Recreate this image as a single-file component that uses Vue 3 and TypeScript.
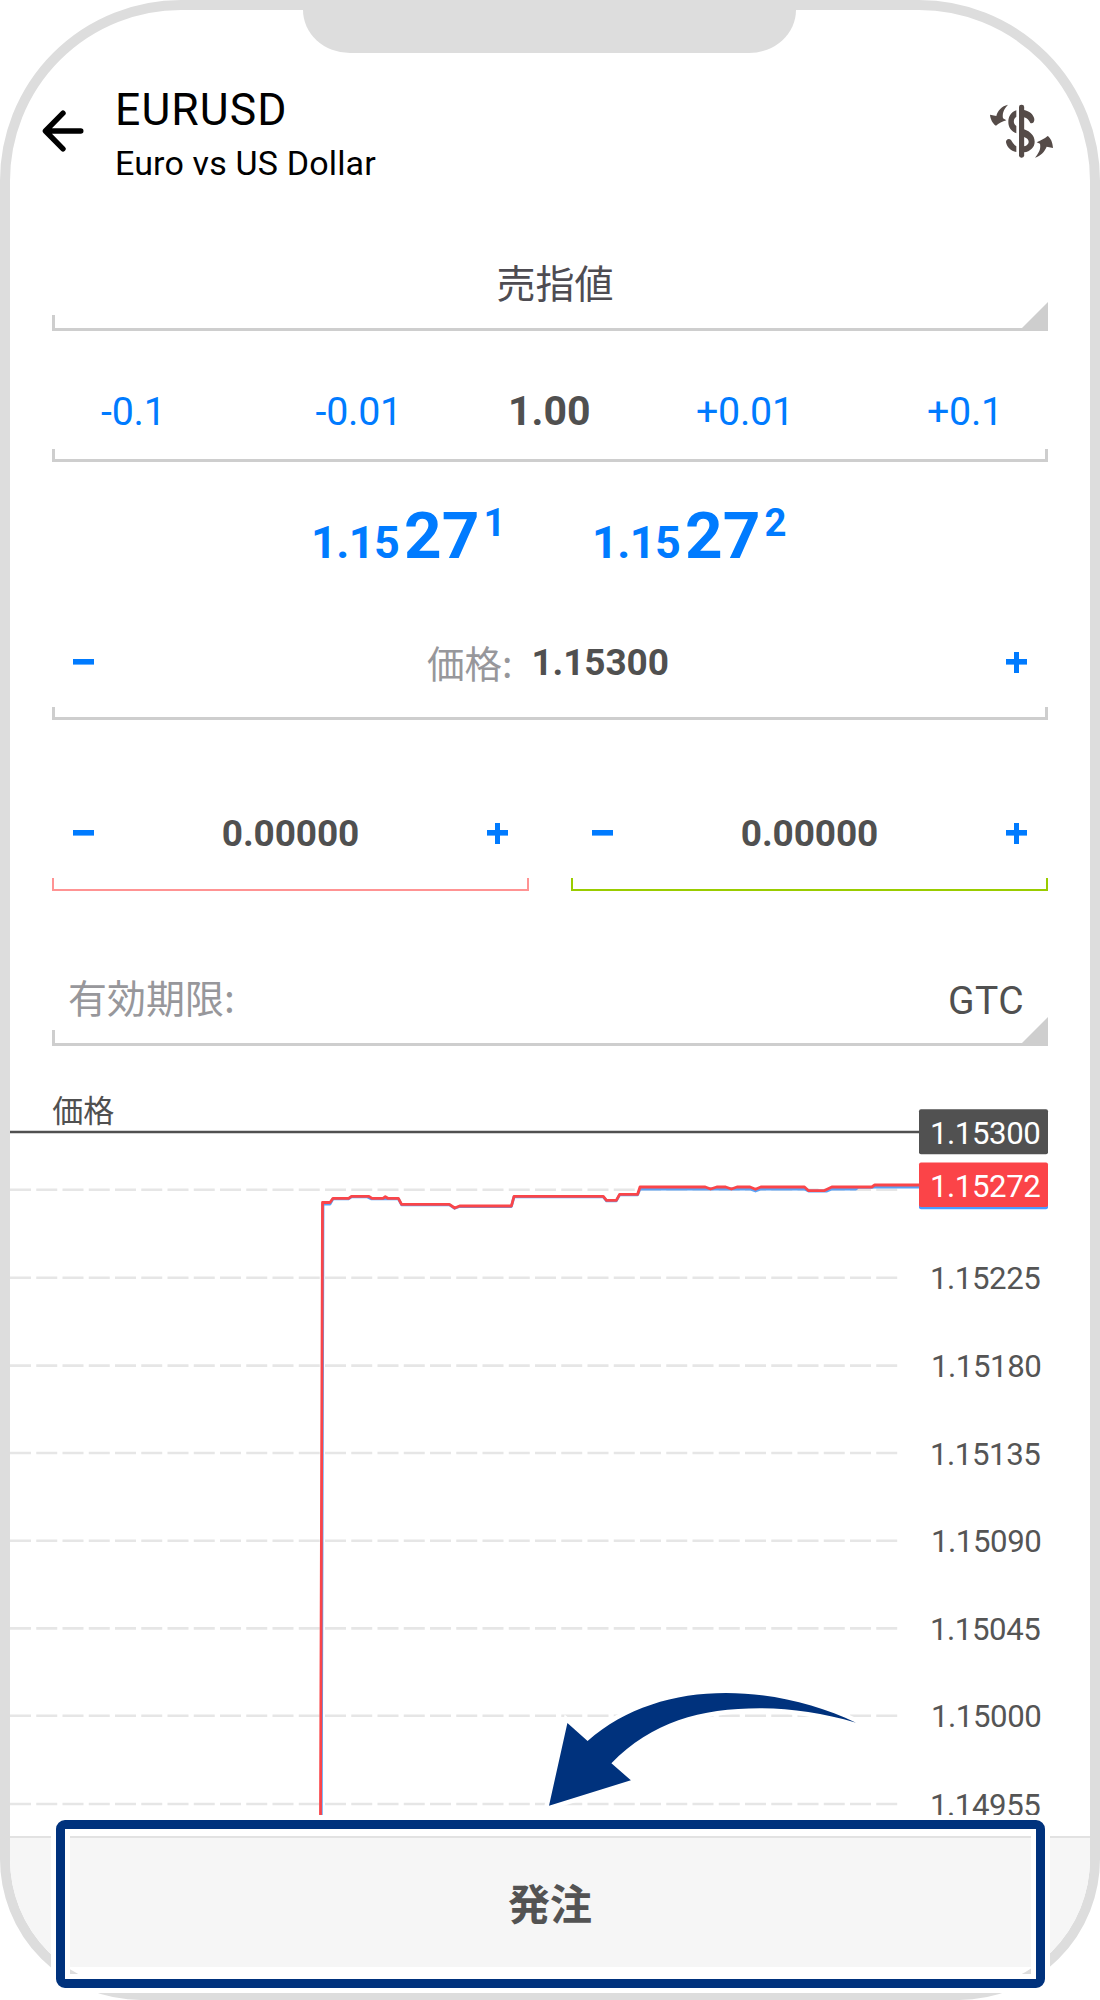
<script setup lang="ts">
interface AxisLabel {
  text: string
  line: number
  x: number
}

const volumeSteps: { label: string; current?: boolean }[] = [
  { label: '-0.1' },
  { label: '-0.01' },
  { label: '1.00', current: true },
  { label: '+0.01' },
  { label: '+0.1' },
]

const quotes = [
  { head: '1.15', pips: '27', point: '1' },
  { head: '1.15', pips: '27', point: '2' },
]

const stops = [
  { kind: 'loss', value: '0.00000' },
  { kind: 'profit', value: '0.00000' },
]

const axis: AxisLabel[] = [
  { text: '1.15225', line: 1277.7, x: 1040.5 },
  { text: '1.15180', line: 1365.6, x: 1041.5 },
  { text: '1.15135', line: 1453, x: 1040.5 },
  { text: '1.15090', line: 1540.8, x: 1041.5 },
  { text: '1.15045', line: 1628.4, x: 1040.5 },
  { text: '1.15000', line: 1715.8, x: 1041.5 },
  { text: '1.14955', line: 1804, x: 1040.5 },
]
const gridLines = [1189.7, ...axis.map((a) => a.line)]

const askPath =
  'M320.5 1815L322.5 1202.5L330 1202.5L333 1198.3H348.5L351.5 1196.3H369L372 1198.3H383L385.3 1196.7L387.8 1198.3H398.4L401.6 1204.3H449.4L454.7 1208L459.6 1206H511.4L514 1196.3H603.3L606.5 1200.3H616.3L619.6 1194.3H637.6L640 1187H705.3L710.6 1189L716.7 1187H725.7L731.4 1189L737 1187H750L755.5 1189.3L760.8 1187H804.5L808.6 1190.7H824L831.8 1187H871.8L874.7 1185H920'
const bidPath =
  'M321.3 1815L323 1204H330L333 1198.8H348.5L351.5 1196.8H367L371 1198.8H398.4L401.6 1204.8H449.4L454.7 1208.3L459.6 1206.5H511.4L514 1196.8H603.3L606.5 1200.8H616.3L619.6 1194.8H637.6L640 1189H750L755.5 1191L760.8 1189H804.5L808.6 1191H827L831.8 1189H856L858 1187.4H871.8L874.7 1187H920'
</script>

<template>
  <main class="stage">
    <div class="phone">
      <div class="notch"></div>
      <div class="screen">
        <header class="header">
          <svg class="back" width="44" height="42" viewBox="0 0 44 42">
            <path d="M39.8 21H5M22 3.2L4.4 21L22 38.8" />
          </svg>
          <div class="titles">
            <h1>EURUSD</h1>
            <p>Euro vs US Dollar</p>
          </div>
          <svg class="swap" width="64" height="56" viewBox="60 70 192 168">
            <rect x="147" y="75" width="15.5" height="159" rx="7" />
            <path d="M139 92C123 97 115 111 115 127C115 143 124 155 139 161V139C129 132 129 118 139 111Z" />
            <path d="M162 91C178 94 190 104 193 118C194 128 187 133 181 130C177 122 171 115 162 113Z" />
            <path d="M162 149C182 156 194 169 194 186C194 203 181 215 162 218V200C181 196 181 178 162 172Z" />
            <path d="M108 188C107 179 117 174 123 181C128 190 133 196 139 200V217C122 214 111 203 108 188Z" />
            <path d="M114 75C99 91 97 103 99 116L109 122C97 125 86 131 78 138C68 132 61 118 60 105L79 109C83 93 95 79 114 75Z" />
            <path d="M195 234C211 214 212 205 210 192L200 188C211 183 223 177 233 169C242 175 248 188 249 205L230 201C224 216 212 229 195 234Z" />
          </svg>
        </header>

        <section class="field order-type">
          <span class="cjk">売指値</span>
          <i class="corner"></i>
        </section>

        <section class="field volume">
          <span v-for="s in volumeSteps" :key="s.label" :class="{ current: s.current }">{{ s.label }}</span>
        </section>

        <section class="quotes">
          <div v-for="q in quotes" :key="q.point" class="quote">
            <span class="head">{{ q.head }}</span><span class="pips">{{ q.pips }}</span><span class="point">{{ q.point }}</span>
          </div>
        </section>

        <section class="field stepper price">
          <i class="minus"></i>
          <div class="value">
            <span class="cjk label">価格:</span><b>1.15300</b>
          </div>
          <i class="plus"></i>
        </section>

        <section class="stops">
          <div v-for="s in stops" :key="s.kind" class="field stepper" :class="s.kind">
            <i class="minus"></i>
            <b>{{ s.value }}</b>
            <i class="plus"></i>
          </div>
        </section>

        <section class="field expiry">
          <span class="cjk label">有効期限:</span>
          <span class="gtc">GTC</span>
          <i class="corner"></i>
        </section>

        <svg class="chart" width="1080" height="769" viewBox="10 1046 1080 769">
          <text class="caption" x="52.2" y="1122">価格</text>
          <line v-for="y in gridLines" :key="y" class="grid" x1="10" x2="897.2" :y1="y" :y2="y" />
          <path class="bid" :d="bidPath" />
          <path class="ask" :d="askPath" />
          <line class="order-line" x1="10" x2="920" y1="1132" y2="1132" />
          <rect x="919" y="1170" width="129" height="39.3" rx="2" fill="#4a9bff" />
          <rect x="919" y="1162.5" width="129" height="44.6" rx="2" fill="#fb4448" />
          <rect x="919" y="1109.2" width="129" height="45" rx="2" fill="#515151" />
          <text class="tag" x="1040.5" y="1143.7">1.15300</text>
          <text class="tag" x="1040.5" y="1196.7">1.15272</text>
          <text v-for="a in axis" :key="a.text" class="axis" :x="a.x" :y="a.line + 11.6">{{ a.text }}</text>
          <path
            class="pointer"
            d="M549 1805.7L567.4 1723L587.6 1741C625 1708 674 1693 726 1693C772 1693 818 1704.5 856 1722.7C823 1713 791 1708.3 760 1708.3C700 1708.3 652 1722 611.4 1763.3L630.9 1780.3Z"
          />
        </svg>

        <footer class="footer">
          <button type="button" class="cjk">発注</button>
        </footer>
      </div>
    </div>
    <div class="highlight"></div>
  </main>
</template>

<style>
body {
  margin: 0;
  background: #fff;
}
</style>

<style scoped>
.stage,
.stage *,
.stage *::after {
  box-sizing: border-box;
}
.stage {
  position: relative;
  width: 1100px;
  height: 2000px;
  overflow: hidden;
  font-family: Roboto, 'Noto Sans CJK JP', sans-serif;
  color: #505050;
}
.phone {
  position: relative;
  height: 2000px;
  border: 10px solid #ddd;
  border-radius: 181px 181px 141px 141px;
}
.notch {
  position: absolute;
  top: -1px;
  left: 293px;
  width: 493px;
  height: 44px;
  background: #ddd;
  border-radius: 0 0 47px 47px / 0 0 43px 43px;
}
.screen {
  display: flex;
  flex-direction: column;
  height: 1980px;
  overflow: hidden;
  border-radius: 171px 171px 131px 131px;
}
.cjk {
  font-family: 'Noto Sans CJK JP', sans-serif;
}

.header {
  display: flex;
  align-items: center;
  height: 243px;
  padding: 0 36px 0 31px;
}
.back {
  margin-bottom: 1px;
  fill: none;
  stroke: #000;
  stroke-width: 5.4;
  stroke-linecap: round;
  stroke-linejoin: round;
}
.titles {
  flex: 1;
  margin: 6px 0 0 30px;
  color: #000;
}
h1 {
  margin: 0;
  font-size: 44.5px;
  font-weight: 400;
  line-height: 52px;
  letter-spacing: 1.1px;
}
p {
  margin: 5px 0 0;
  font-size: 34px;
  line-height: 44px;
  letter-spacing: 0.16px;
}
.swap {
  margin-bottom: 1px;
  fill: #554b48;
}

/* Underline with short upright ticks at both ends */
.field {
  --line: #cecece;
  --weight: 3px;
  --tick: 13px;
  position: relative;
  display: flex;
  align-items: center;
  margin: 0 42px;
}
.field::after {
  content: '';
  position: absolute;
  left: 0;
  right: 0;
  bottom: 0;
  height: var(--tick);
  border: var(--weight) solid var(--line);
  border-top: 0;
}
.corner {
  position: absolute;
  right: 0;
  bottom: 0;
  width: 29px;
  height: 29px;
  background: #cecece;
  clip-path: polygon(100% 0, 100% 100%, 0 100%);
}

.order-type {
  --tick: 16px;
  height: 78px;
  justify-content: center;
  padding: 0 0 23px 10px;
  font-size: 39px;
  line-height: 50px;
  color: #4e4c52;
}

.volume {
  display: grid;
  grid-template-columns: 214.5px 192.5px 188px 231px auto;
  height: 101px;
  margin-top: 30px;
  padding-left: 49px;
  font-size: 39.4px;
  line-height: 50px;
  letter-spacing: -0.25px;
  color: #007bff;
}
.volume .current {
  margin-bottom: 1px;
  font-size: 41px;
  font-weight: 700;
  letter-spacing: 0;
  color: #505050;
}

.quotes {
  display: flex;
  height: 144px;
  padding: 36px 0 0 301px;
  color: #007bff;
  font-weight: 700;
}
.quote {
  width: 281px;
  font-size: 65.7px;
  line-height: 76px;
  white-space: nowrap;
}
.head {
  margin-right: 5px;
  font-size: 45px;
  line-height: 0;
  letter-spacing: -0.6px;
}
.point {
  margin-left: 4px;
  font-size: 38.4px;
  line-height: 0;
  vertical-align: 22px;
}

.stepper {
  height: 114px;
  justify-content: space-between;
  padding: 0 21px;
  font-size: 37px;
  line-height: 46px;
}
.stepper b {
  letter-spacing: -0.1px;
}
.minus,
.plus {
  width: 21px;
  height: 21px;
  margin-bottom: 2px;
  background: linear-gradient(#007bff, #007bff) center / 21px 5.6px no-repeat;
}
.plus {
  background:
    linear-gradient(#007bff, #007bff) center / 21px 5.6px no-repeat,
    linear-gradient(#007bff, #007bff) center / 5px 21px no-repeat;
}
.price .value {
  display: flex;
  flex: 1;
  align-items: center;
  padding-left: 333px;
}
.label {
  color: #97979b;
}
.price .label {
  margin: 0 19px 3px 0;
  font-size: 37.5px;
}

.stops {
  display: grid;
  grid-template-columns: 477px 477px;
  gap: 42px;
  margin: 57px 42px 0;
}
.stops .field {
  --weight: 2px;
  margin: 0;
}
.loss {
  --line: #ff9393;
}
.profit {
  --line: #9acc00;
}

.expiry {
  --tick: 16px;
  justify-content: space-between;
  height: 91px;
  margin-top: 64px;
  padding: 0 24px 0 16px;
  font-size: 39px;
  line-height: 48px;
}
.expiry .label {
  margin-bottom: 10px;
}
.gtc {
  letter-spacing: 0.4px;
}

.chart {
  display: block;
  flex: none;
}
.caption {
  font: 31px 'Noto Sans CJK JP', sans-serif;
  fill: #505050;
}
.grid {
  stroke: #e6e6e6;
  stroke-width: 2.6;
  stroke-dasharray: 21 5.25;
}
.order-line {
  stroke: #505050;
  stroke-width: 2.6;
}
.ask,
.bid {
  fill: none;
  stroke-width: 2.8;
  stroke-linejoin: round;
}
.ask {
  stroke: #fa4549;
}
.bid {
  stroke: #5aa2f5;
}
.axis,
.tag {
  font-family: Roboto, sans-serif;
  font-size: 31.2px;
  letter-spacing: -0.4px;
  text-anchor: end;
  fill: #555;
}
.tag {
  fill: #fff;
}
.pointer {
  fill: #00327d;
  stroke: #fff;
  stroke-width: 9;
  paint-order: stroke;
}

.footer {
  margin-top: 21px;
  height: 131px;
  border-top: 2px solid #e2e2e2;
  background: #f6f6f6;
}
button {
  display: block;
  width: 100%;
  height: 128px;
  padding: 0;
  border: 0;
  background: none;
  font-size: 42px;
  font-weight: 700;
  line-height: 60px;
  color: #535353;
}

.highlight {
  position: absolute;
  left: 55.5px;
  top: 1820px;
  width: 989px;
  height: 167.5px;
  border: 9.5px solid #00327d;
  border-radius: 9px;
  box-shadow:
    0 0 0 5px #fff,
    inset 0 0 0 5px #fff;
}
</style>
